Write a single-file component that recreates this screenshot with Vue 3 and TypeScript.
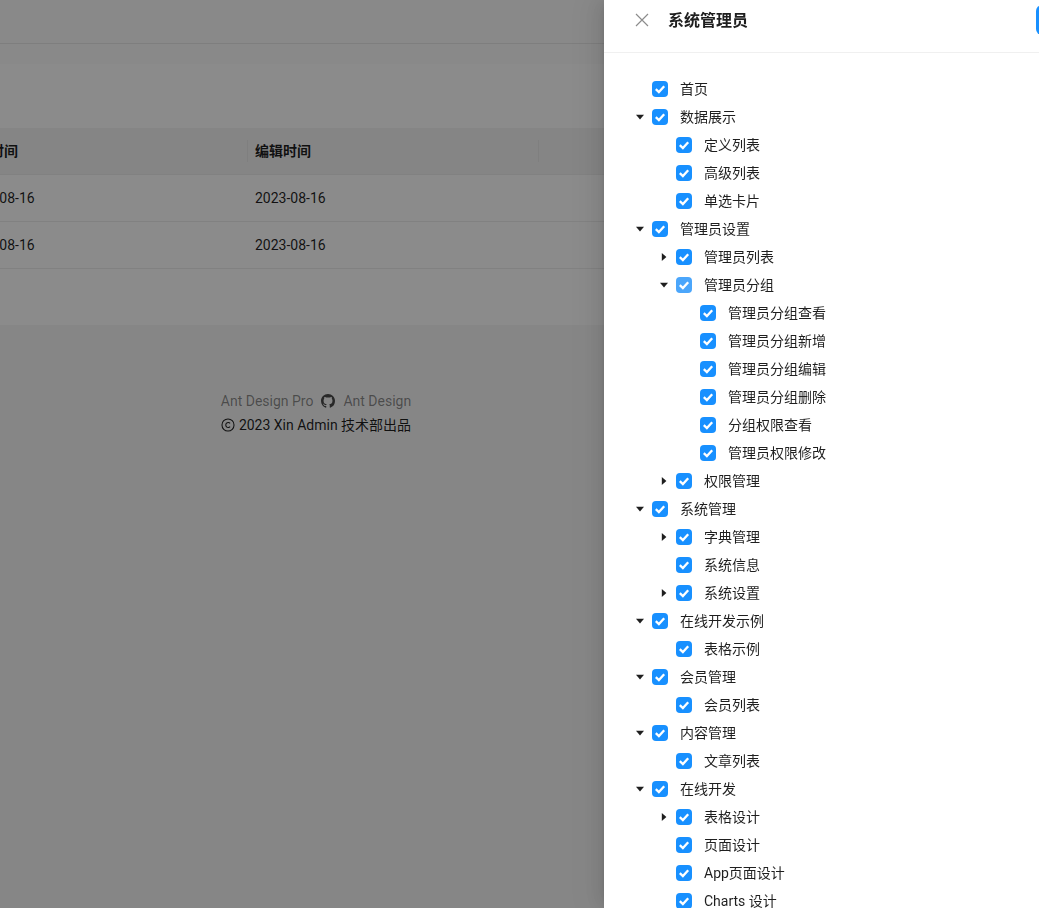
<template>
  <div class="page">
    <div class="topbar"></div>
    <div class="card">
      <div class="table">
        <div class="row head">
          <div class="cell first">创建时间</div>
          <div class="cell second">编辑时间</div>
          <div class="cell"></div>
        </div>
        <div v-for="r in 2" :key="r" class="row">
          <div class="cell first">2023-08-16</div>
          <div class="cell second">2023-08-16</div>
          <div class="cell"></div>
        </div>
      </div>
    </div>
    <div class="footer">
      <div class="links">
        <span>Ant Design Pro</span>
        <svg class="gh" viewBox="0 0 16 16" width="14" height="14">
          <path fill="currentColor" d="M8 0C3.58 0 0 3.58 0 8c0 3.54 2.29 6.53 5.47 7.59.4.07.55-.17.55-.38 0-.19-.01-.82-.01-1.49-2.01.37-2.53-.49-2.69-.94-.09-.23-.48-.94-.82-1.13-.28-.15-.68-.52-.01-.53.63-.01 1.08.58 1.23.82.72 1.21 1.87.87 2.33.66.07-.52.28-.87.51-1.07-1.78-.2-3.64-.89-3.64-3.95 0-.87.31-1.59.82-2.15-.08-.2-.36-1.02.08-2.12 0 0 .67-.21 2.2.82.64-.18 1.32-.27 2-.27s1.36.09 2 .27c1.53-1.04 2.2-.82 2.2-.82.44 1.1.16 1.92.08 2.12.51.56.82 1.27.82 2.15 0 3.07-1.87 3.75-3.65 3.95.29.25.54.73.54 1.48 0 1.07-.01 1.93-.01 2.2 0 .21.15.46.55.38A8.01 8.01 0 0 0 16 8c0-4.42-3.58-8-8-8z" />
        </svg>
        <span>Ant Design</span>
      </div>
      <div class="copy">
        <svg viewBox="0 0 16 16" width="14" height="14" fill="none" stroke="currentColor">
          <circle cx="8" cy="8" r="6.9" stroke-width="1.2" />
          <path d="M10.4 6.2A2.8 2.8 0 1 0 10.4 9.8" stroke-width="1.2" />
        </svg>
        <span>2023 Xin Admin 技术部出品</span>
      </div>
    </div>
  </div>

  <div class="mask"></div>

  <aside class="drawer">
    <header class="drawer-head">
      <svg class="close" viewBox="0 0 14 14" width="14" height="14">
        <path d="M1 1L13 13M13 1L1 13" stroke="currentColor" stroke-width="1.2" fill="none" />
      </svg>
      <span class="title">系统管理员</span>
      <button class="save" type="button"></button>
    </header>
    <div class="tree">
      <div
        v-for="node in nodes"
        :key="node.id"
        class="node"
        :style="{ paddingLeft: node.level * 24 + 'px' }"
      >
        <span class="switcher">
          <svg
            v-if="node.arrow"
            viewBox="0 0 10 10"
            width="10"
            height="10"
            :class="{ closed: node.arrow === 'closed' }"
          >
            <path d="M1 2.8H9L5 7.4Z" fill="currentColor" />
          </svg>
        </span>
        <span class="check" :class="{ hover: node.hover }">
          <svg viewBox="0 0 16 16" width="16" height="16">
            <path d="M3.8 8.1L6.9 11.1L12.2 5.3" fill="none" stroke="#fff" stroke-width="2.3" />
          </svg>
        </span>
        <span class="label">{{ node.label }}</span>
      </div>
    </div>
  </aside>
</template>

<script setup lang="ts">
type Arrow = 'open' | 'closed' | undefined;

interface TreeNode {
  id: number;
  label: string;
  level: number;
  arrow: Arrow;
  hover: boolean;
}

// level | arrow (o 展开, c 收起, - 无) | label
const raw = `0|-|首页
0|o|数据展示
1|-|定义列表
1|-|高级列表
1|-|单选卡片
0|o|管理员设置
1|c|管理员列表
1|o|管理员分组
2|-|管理员分组查看
2|-|管理员分组新增
2|-|管理员分组编辑
2|-|管理员分组删除
2|-|分组权限查看
2|-|管理员权限修改
1|c|权限管理
0|o|系统管理
1|c|字典管理
1|-|系统信息
1|c|系统设置
0|o|在线开发示例
1|-|表格示例
0|o|会员管理
1|-|会员列表
0|o|内容管理
1|-|文章列表
0|o|在线开发
1|c|表格设计
1|-|页面设计
1|-|App页面设计
1|-|Charts 设计`;

const nodes: TreeNode[] = raw.split('\n').map((line, id) => {
  const [level, arrow, label] = line.split('|');
  return {
    id,
    label,
    level: Number(level),
    arrow: arrow === 'o' ? 'open' : arrow === 'c' ? 'closed' : undefined,
    hover: label === '管理员分组',
  };
});
</script>

<style>
html,
body {
  margin: 0;
  height: 100%;
  overflow: hidden;
}
</style>

<style scoped>
.page {
  width: 1039px;
  height: 908px;
  background: #f5f5f5;
  font-family: Roboto, "Noto Sans CJK SC", sans-serif;
  font-size: 14px;
  color: rgba(0, 0, 0, 0.88);
  overflow: hidden;
}

.topbar {
  height: 43px;
  border-bottom: 1px solid #e6e6e6;
  background: #f9f9f9;
}

.card {
  padding-top: 84px;
  height: 197px;
  background: linear-gradient(#f9f9f9 20px, #fdfdfd 20px);
}

.table {
  background: #fdfdfd;
  height: 197px;
}

.row {
  display: flex;
  height: 46px;
  border-bottom: 1px solid #ececec;
  align-items: center;
}

.row.head {
  background: #f2f2f2;
  font-weight: 600;
}

.cell {
  width: 291px;
  padding-left: 8px;
  box-sizing: border-box;
  line-height: 22px;
}

.cell.first {
  width: 247px;
  padding-left: 0;
  text-indent: -36px;
  white-space: nowrap;
  overflow: hidden;
}

.head .cell.first {
  text-indent: -38px;
}

.head .second,
.head .cell:last-child {
  border-left: 1px solid #e8e8e8;
  padding-left: 7px;
}

.head .cell {
  height: 22px;
}

.footer {
  width: 632px;
  padding-top: 64px;
  text-align: center;
  line-height: 24px;
}

.links {
  display: flex;
  justify-content: center;
  align-items: center;
  gap: 8px;
  color: rgba(0, 0, 0, 0.45);
}

.gh {
  color: rgba(0, 0, 0, 0.7);
}

.copy {
  display: flex;
  justify-content: center;
  align-items: center;
  gap: 4px;
  color: rgba(0, 0, 0, 0.88);
}

.mask {
  position: fixed;
  inset: 0;
  background: rgba(0, 0, 0, 0.45);
}

.drawer {
  position: fixed;
  top: 0;
  left: 604px;
  width: 640px;
  height: 908px;
  background: #fff;
  box-shadow: -6px 0 16px 0 rgba(0, 0, 0, 0.08), -3px 0 6px -4px rgba(0, 0, 0, 0.12), -9px 0 28px 8px rgba(0, 0, 0, 0.05);
  font-family: Roboto, "Noto Sans CJK SC", sans-serif;
  font-size: 14px;
  color: rgba(0, 0, 0, 0.88);
  overflow: hidden;
}

.drawer-head {
  display: flex;
  align-items: center;
  height: 40px;
  padding: 0 0 12px 31px;
  border-bottom: 1px solid #f0f0f0;
}

.close {
  color: rgba(0, 0, 0, 0.45);
  margin-right: 19px;
  flex-shrink: 0;
}

.title {
  font-size: 16px;
  font-weight: 600;
  line-height: 22px;
  padding-top: 1px;
}

.save {
  margin-left: 288px;
  width: 80px;
  height: 30px;
  border: 0;
  border-radius: 6px;
  background: #1890ff;
  flex-shrink: 0;
  padding: 0;
}

.tree {
  padding: 22px 0 0 24px;
}

.node {
  display: flex;
  align-items: center;
  height: 28px;
}

.switcher {
  display: flex;
  justify-content: center;
  align-items: center;
  width: 24px;
  color: rgba(0, 0, 0, 0.88);
}

.switcher .closed {
  transform: rotate(-90deg);
}

.check {
  display: block;
  width: 16px;
  height: 16px;
  border-radius: 4px;
  background: #1890ff;
}

.check svg {
  display: block;
}

.check.hover {
  background: #4ba6fb;
}

.label {
  padding-left: 12px;
  line-height: 24px;
  white-space: nowrap;
}
</style>
